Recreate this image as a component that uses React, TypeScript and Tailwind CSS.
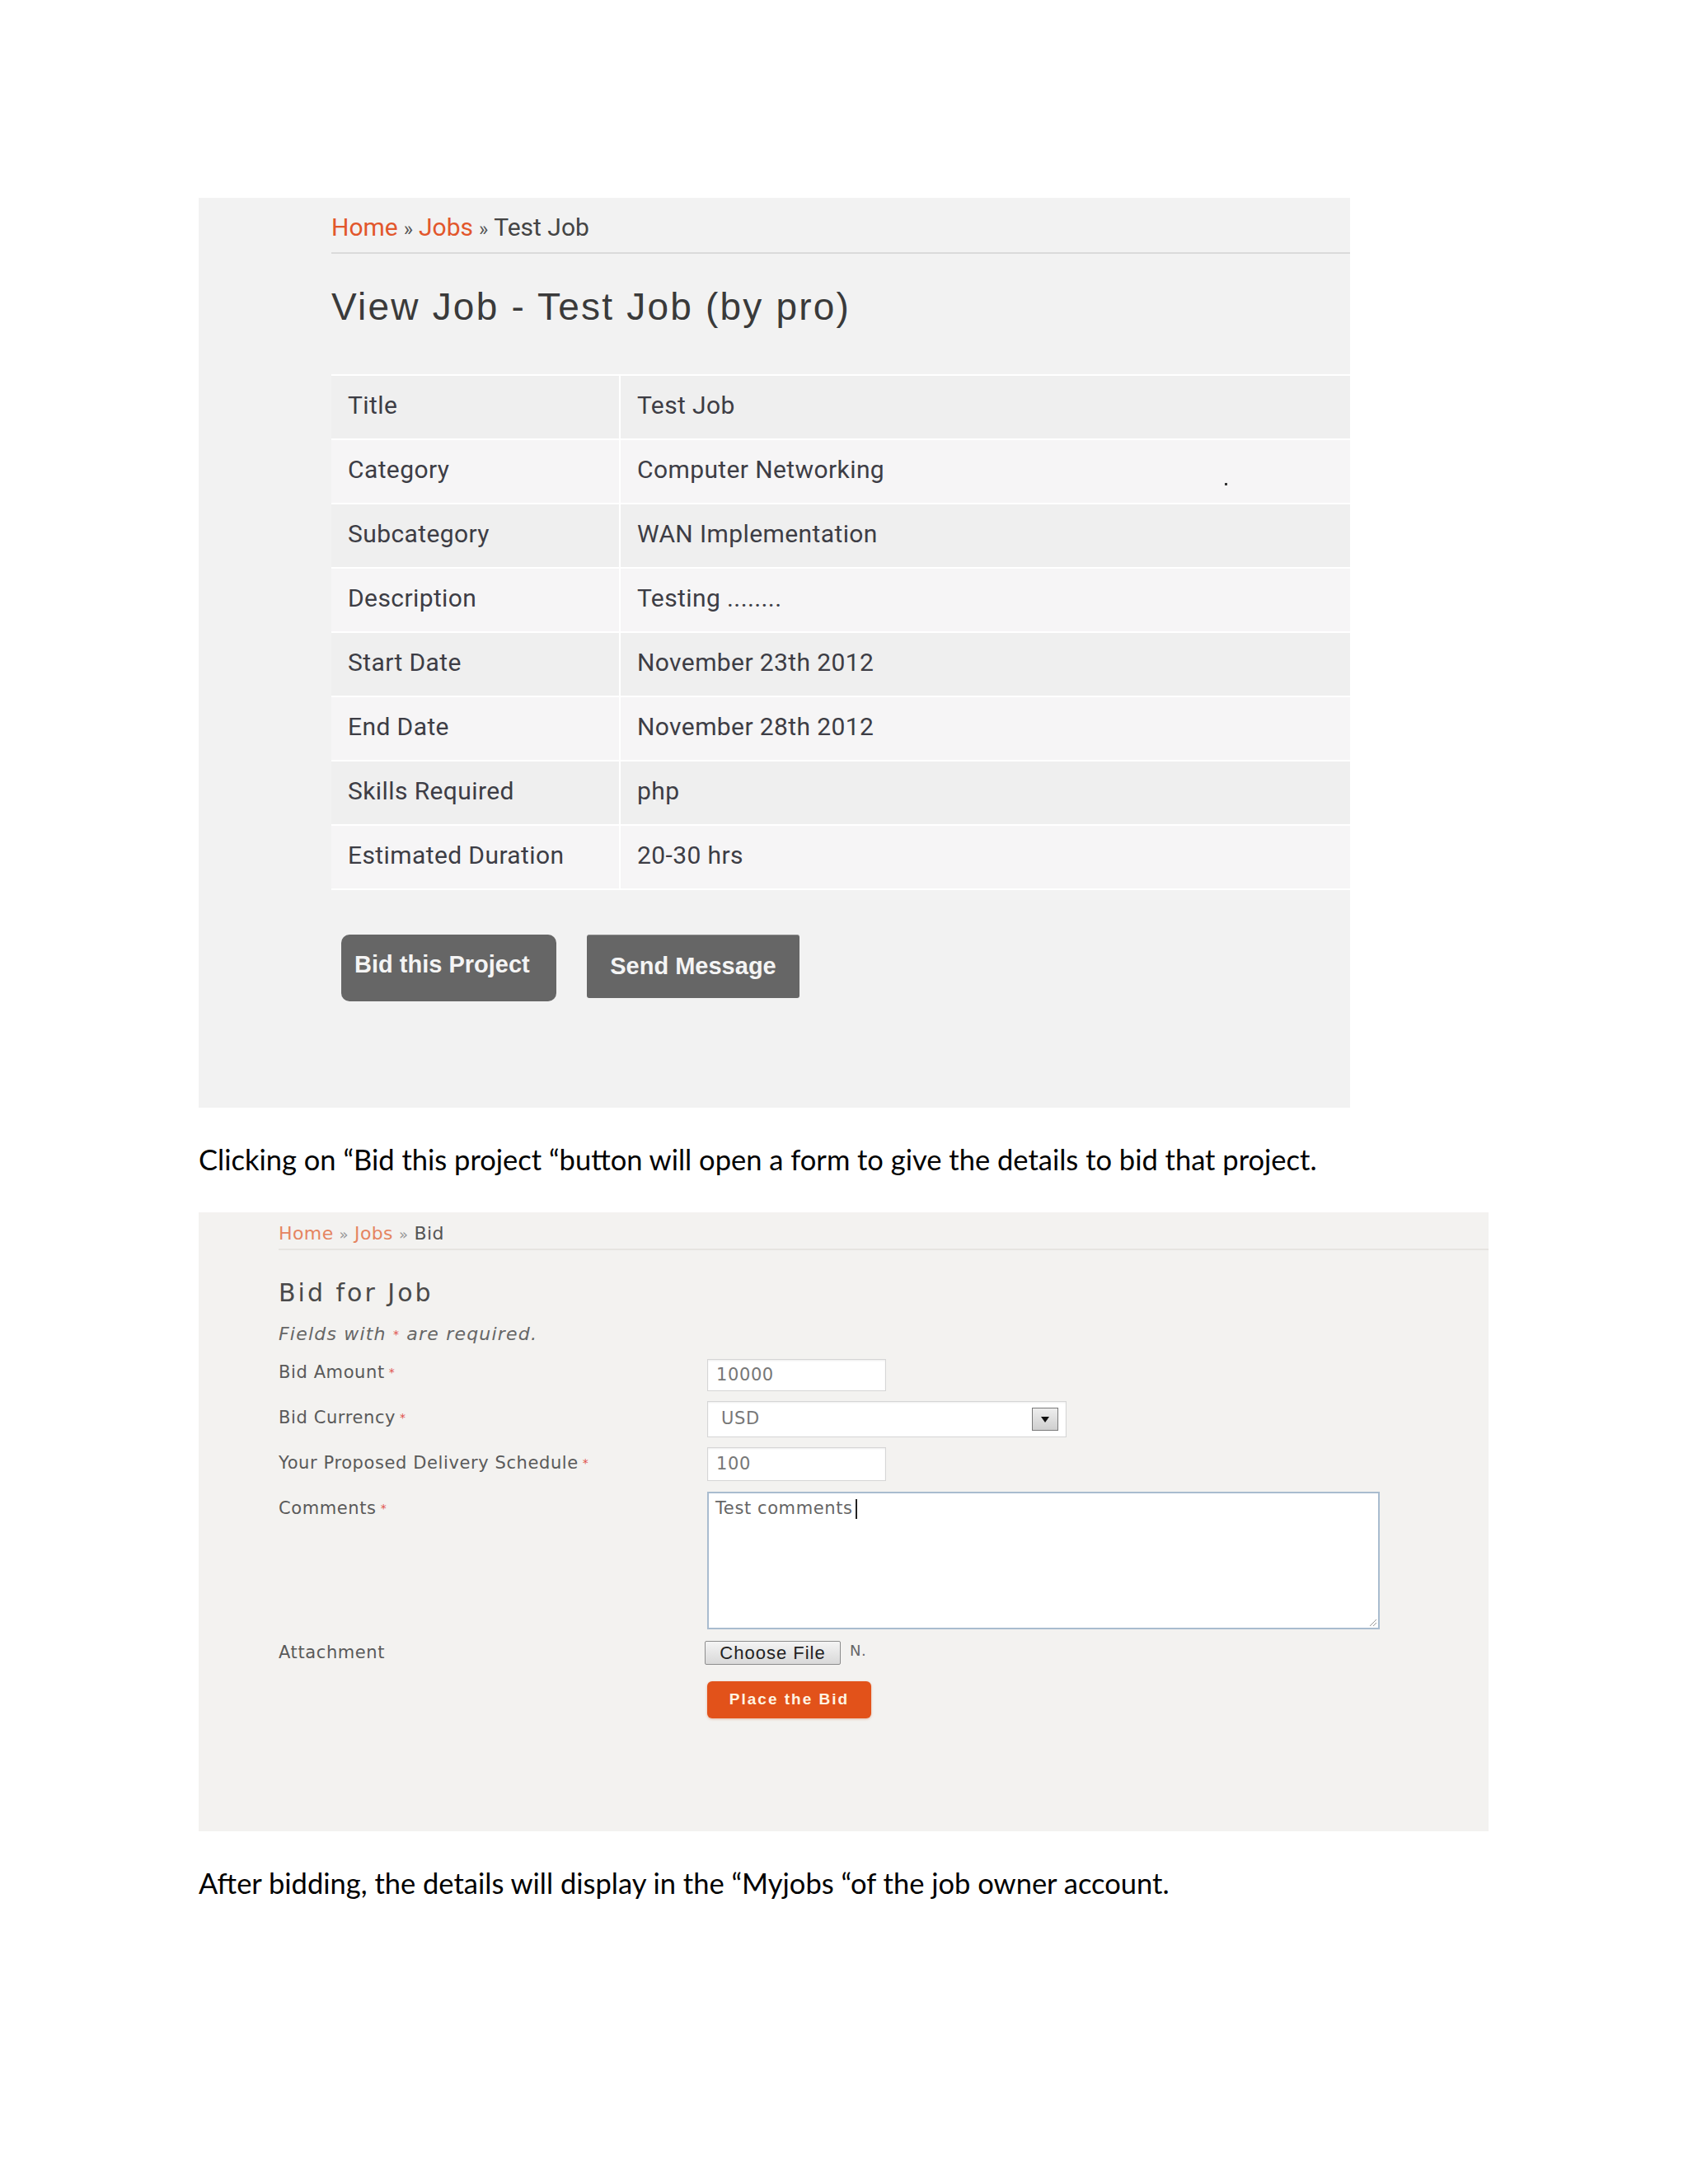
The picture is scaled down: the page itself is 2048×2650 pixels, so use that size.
import React from 'react';

const rows: [string, string][] = [
  ['Title', 'Test Job'],
  ['Category', 'Computer Networking'],
  ['Subcategory', 'WAN Implementation'],
  ['Description', 'Testing ........'],
  ['Start Date', 'November 23th 2012'],
  ['End Date', 'November 28th 2012'],
  ['Skills Required', 'php'],
  ['Estimated Duration', '20-30 hrs'],
];

const Req = () => <span className="text-[#e0504a] text-[14px] align-top ml-[5px]">*</span>;

const JobPanel = () => (
  <div className="w-[1397px] h-[1104px] bg-[#f2f2f2] pl-[161px] pt-[16px] flex flex-col font-['Roboto',sans-serif]">
    {/* Breadcrumb */}
    <div className="h-[52px] pb-[12px] border-b-2 border-[#dadada] text-[30px] leading-[40px] text-[#444]">
      <span className="text-[#e2572c]">Home</span>
      <span className="text-[#555] text-[24px] mx-[7px]">»</span>
      <span className="text-[#e2572c]">Jobs</span>
      <span className="text-[#555] text-[24px] mx-[7px]">»</span>
      <span>Test Job</span>
    </div>

    <h1 className="mt-[38px] h-[52px] leading-[52px] text-[46px] tracking-[2.2px] text-[#3a3a3a] font-['Liberation_Sans',Arial,sans-serif]">
      View Job - Test Job (by pro)
    </h1>

    {/* Details table */}
    <div className="mt-[56px] border-t-2 border-white">
      {rows.map(([label, value], i) => (
        <div
          key={label}
          className={`relative flex h-[78px] border-b-2 border-white text-[30px] tracking-[0.4px] text-[#3d3d45] ${i % 2 === 0 ? 'bg-[#efefef]' : 'bg-[#f6f5f6]'}`}
        >
          <div className="w-[351px] shrink-0 pl-[20px] pb-[5px] flex items-center border-r-2 border-white">{label}</div>
          <div className="flex-1 pl-[20px] pb-[5px] flex items-center">{value}</div>
          {label === 'Category' && <span className="absolute left-[1084px] top-[52px] w-[3px] h-[3px] bg-[#333]" />}
        </div>
      ))}
    </div>

    {/* Actions */}
    <div className="mt-[54px] ml-[12px] flex items-start gap-[37px] font-['Liberation_Sans',Arial,sans-serif] font-bold text-[29px] text-[#f4f4f4]">
      <button className="w-[261px] h-[81px] rounded-[10px] bg-[#666666] text-left pl-[16px] pb-[8px]">Bid this Project</button>
      <button className="w-[258px] h-[77px] rounded-[3px] bg-[#666666] border-t border-[#8a8a8a] text-center">Send Message</button>
    </div>
  </div>
);

const inputCls = 'bg-white border border-[#d6d6d6] shadow-[inset_0_1px_2px_rgba(0,0,0,0.08)] text-[21px] text-[#777] flex items-center';

const BidPanel = () => (
  <div className="w-[1565px] h-[751px] bg-[#f3f2f0] pl-[97px] pt-[12px] flex flex-col font-['DejaVu_Sans',sans-serif]">
    <div className="h-[34px] pb-[6px] border-b-2 border-[#e6e4e1] text-[22px] tracking-[0.4px] leading-[28px] text-[#555]">
      <span className="text-[#e58460]">Home</span>
      <span className="text-[#999] text-[18px] mx-[7px]">»</span>
      <span className="text-[#e58460]">Jobs</span>
      <span className="text-[#999] text-[18px] mx-[7px]">»</span>
      <span>Bid</span>
    </div>

    <h2 className="mt-[32px] h-[40px] leading-[40px] text-[30px] tracking-[3px] text-[#4a4a4a]">Bid for Job</h2>

    <p className="mt-[16px] h-[28px] leading-[28px] text-[22px] italic text-[#666] tracking-[1.2px]">
      Fields with <span className="text-[#e0504a] text-[14px] align-top">*</span> are required.
    </p>

    <div className="mt-[16px] flex flex-col text-[21px] tracking-[0.6px] text-[#5a5a5a]">
      <div className="flex">
        <div className="w-[520px] shrink-0 leading-[28px] pt-[2px]">Bid Amount<Req /></div>
        <div className={`${inputCls} w-[217px] h-[39px] pl-[10px]`}>10000</div>
      </div>

      <div className="flex mt-[12px]">
        <div className="w-[520px] shrink-0 leading-[28px] pt-[6px]">Bid Currency<Req /></div>
        <div className={`${inputCls} w-[436px] h-[44px] pl-[16px] pr-[9px] justify-between`}>
          <span>USD</span>
          <span className="w-[32px] h-[28px] border border-[#7a7a7a] bg-gradient-to-b from-[#eeeeee] to-[#cfcfcf] flex items-center justify-center">
            <svg width="12" height="9" viewBox="0 0 12 9"><path d="M1 1h10L6 8z" fill="#111" /></svg>
          </span>
        </div>
      </div>

      <div className="flex mt-[12px]">
        <div className="w-[520px] shrink-0 leading-[28px] pt-[5px]">Your Proposed Delivery Schedule<Req /></div>
        <div className={`${inputCls} w-[217px] h-[41px] pl-[10px]`}>100</div>
      </div>

      <div className="flex mt-[13px]">
        <div className="w-[520px] shrink-0 leading-[28px] pt-[6px]">Comments<Req /></div>
        <div className="relative w-[816px] h-[167px] bg-white border-2 border-[#a9bccf] pl-[8px] pt-[4px] text-[21px] text-[#666] leading-[28px]">
          Test comments<span className="inline-block w-[2px] h-[24px] bg-[#222] ml-[3px] align-middle" />
          <svg className="absolute right-[1px] bottom-[1px]" width="12" height="12" viewBox="0 0 12 12">
            <path d="M11 3L3 11M11 7L7 11" stroke="#9a9a9a" strokeWidth="1" />
          </svg>
        </div>
      </div>

      <div className="flex mt-[14px]">
        <div className="w-[520px] shrink-0 leading-[26px] pt-[1px]">Attachment</div>
        <div className="flex items-start -ml-[3px]">
          <button className="w-[165px] h-[29px] border border-[#8d8d8d] rounded-[2px] bg-gradient-to-b from-[#f4f4f4] to-[#d9d9d9] text-[22px] leading-[27px] tracking-[1px] text-[#222] font-['Liberation_Sans',Arial,sans-serif]">
            Choose File
          </button>
          <span className="ml-[11px] text-[18px] leading-[24px] text-[#666]">N.</span>
        </div>
      </div>

      <div className="flex mt-[20px]">
        <div className="w-[520px] shrink-0" />
        <button className="w-[199px] h-[45px] rounded-[6px] bg-[#e2521a] shadow-[0_1px_3px_rgba(200,80,20,0.35)] text-[19px] font-bold tracking-[2px] text-[#fff4e2] font-['Liberation_Sans',Arial,sans-serif]">
          Place the Bid
        </button>
      </div>
    </div>
  </div>
);

export default function App() {
  return (
    <div className="w-[2048px] min-h-[2650px] bg-white pt-[240px] pl-[241px] font-['Lato',sans-serif] text-black">
      <JobPanel />
      <p className="mt-[42px] text-[34.5px] leading-[41px]">
        Clicking on “Bid this project “button will open a form to give the details to bid that project.
      </p>
      <div className="mt-[44px]">
        <BidPanel />
      </div>
      <p className="mt-[42px] text-[34.5px] leading-[41px]">
        After bidding, the details will display in the “Myjobs “of the job owner account.
      </p>
    </div>
  );
}
